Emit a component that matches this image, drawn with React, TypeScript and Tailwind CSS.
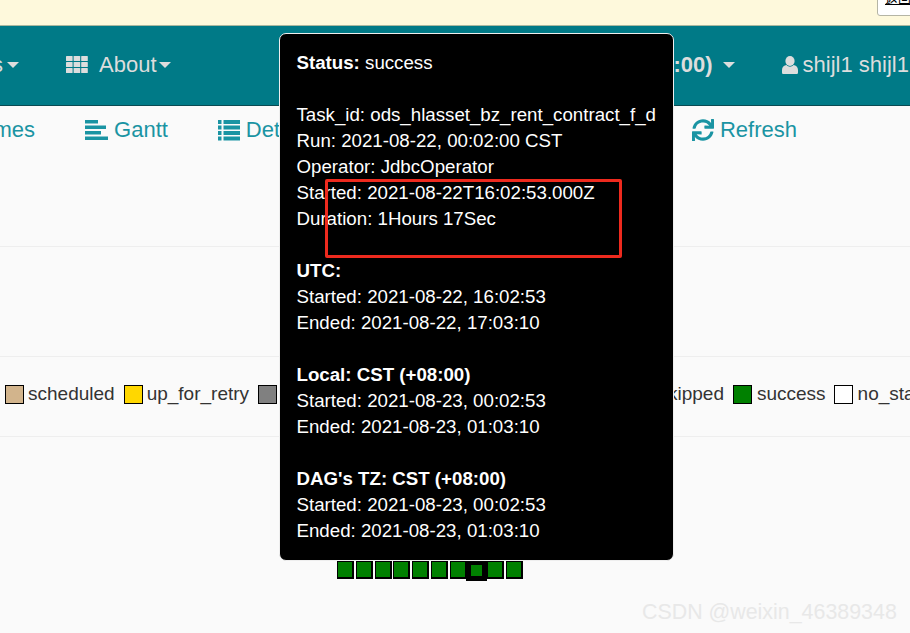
import { FaSync } from 'react-icons/fa';

const legendLeft = [
  { name: 'scheduled', color: 'bg-[#d2b48c]' },
  { name: 'up_for_retry', color: 'bg-[#ffd700]' },
];

const caret = 'inline-block w-0 h-0 border-x-[6px] border-x-transparent border-t-[6px] border-t-[#dddddd]';

function ThIcon() {
  const cells = [0, 1, 2];
  return (
    <svg width="22" height="17" viewBox="0 0 22 17" fill="currentColor" className="mr-[11px]">
      {cells.map((r) =>
        cells.map((c) => <rect key={`${r}-${c}`} x={c * 7.6} y={r * 6} width="6.6" height="5" rx="0.6" />)
      )}
    </svg>
  );
}

function UserIcon() {
  return (
    <svg width="16" height="18" viewBox="0 0 16 18" fill="currentColor" className="ml-[47px] mr-[5px]">
      <ellipse cx="8" cy="5" rx="4.6" ry="5" />
      <path d="M0 14c0-3 2-4.5 4.5-5 1 1.200 2.200 1.700 3.500 1.700s2.500-.5 3.500-1.700c2.500.5 4.500 2 4.500 5v2.500c0 1-.7 1.500-1.500 1.500h-13c-.8 0-1.500-.5-1.500-1.500z" />
    </svg>
  );
}

function GanttIcon() {
  return (
    <svg width="23" height="20" viewBox="0 0 23 20" fill="currentColor" className="mr-[6px]">
      <rect x="0" y="0" width="13" height="3.500" />
      <rect x="0" y="5.500" width="21" height="3.500" />
      <rect x="0" y="11" width="16" height="3.500" />
      <rect x="0" y="16.500" width="23" height="3.500" />
    </svg>
  );
}

function ListIcon() {
  const rows = [0, 1, 2, 3];
  return (
    <svg width="22" height="21" viewBox="0 0 22 21" fill="currentColor" className="mr-[6px]">
      {rows.map((r) => (
        <g key={r}>
          <rect x="0" y={r * 5.500} width="3.500" height="4" />
          <rect x="5.500" y={r * 5.500} width="16.500" height="4" />
        </g>
      ))}
    </svg>
  );
}

function Tooltip() {
  return (
    <div className="absolute left-[279px] top-[33px] w-[395px] h-[528px] bg-black border border-[#eeeeee] rounded-[7px] pl-[16.5px] pt-[15.5px] text-white text-[18.7px] leading-[26px] whitespace-nowrap">
      <div><b>Status:</b> success</div>
      <div className="h-[26px]" />
      <div>Task_id: ods_hlasset_bz_rent_contract_f_d</div>
      <div>Run: 2021-08-22, 00:02:00 CST</div>
      <div>Operator: JdbcOperator</div>
      <div>Started: 2021-08-22T16:02:53.000Z</div>
      <div>Duration: 1Hours 17Sec</div>
      <div className="h-[26px]" />
      <div><b>UTC:</b></div>
      <div>Started: 2021-08-22, 16:02:53</div>
      <div>Ended: 2021-08-22, 17:03:10</div>
      <div className="h-[26px]" />
      <div><b>Local: CST (+08:00)</b></div>
      <div>Started: 2021-08-23, 00:02:53</div>
      <div>Ended: 2021-08-23, 01:03:10</div>
      <div className="h-[26px]" />
      <div><b>DAG's TZ: CST (+08:00)</b></div>
      <div>Started: 2021-08-23, 00:02:53</div>
      <div>Ended: 2021-08-23, 01:03:10</div>
    </div>
  );
}

export default function App() {
  return (
    <div className="relative w-[910px] h-[633px] overflow-hidden bg-[#fafafa] font-['Liberation_Sans',Arial,sans-serif]">
      {/* Banner */}
      <div className="h-[26px] bg-[#fef9dc] border-b border-[#a9b8a0]" />

      {/* Top nav */}
      <div className="h-[80px] bg-[#007a87] border-b border-[#0a4a52] flex items-center pb-[2px] text-[22px] text-[#dddddd] whitespace-nowrap">
        <div className="flex items-center ml-[-8px] w-[66px] gap-[4px]">
          <span>s</span>
          <span className={caret} />
        </div>
        <div className="flex items-center ml-[8px]">
          <ThIcon />
          <span>About</span>
          <span className={`${caret} ml-[2px]`} />
        </div>
        <div className="flex items-center ml-auto mr-[1px]">
          <span className="font-bold">:00)</span>
          <span className={`${caret} ml-[10px]`} />
          <UserIcon />
          <span>shijl1 shijl1</span>
        </div>
      </div>

      {/* Sub nav */}
      <div className="h-[141px] border-b border-[#eeeeee] pt-[11px] flex items-start text-[22px] leading-[26px] text-[#1a94a3] whitespace-nowrap">
        <span className="ml-[-31px]">names</span>
        <span className="flex items-center ml-[50px]">
          <GanttIcon />Gantt
        </span>
        <span className="flex items-center ml-[50px]">
          <ListIcon />Details
        </span>
        <span className="flex items-center ml-auto mr-[113px]">
          <FaSync className="mr-[6px]" />Refresh
        </span>
      </div>

      {/* Spacer */}
      <div className="h-[110px] border-b border-[#eeeeee]" />

      {/* Legend */}
      <div className="h-[80px] border-b border-[#eeeeee] flex items-center pl-[5px] pb-[4px] text-[19px] text-[#333333] whitespace-nowrap">
        {legendLeft.map((item) => (
          <span key={item.name} className="flex items-center mr-[9px]">
            <span className={`w-[19px] h-[19px] border border-black mr-[4px] ${item.color}`} />
            {item.name}
          </span>
        ))}
        <span className="w-[19px] h-[19px] border border-black bg-[#808080]" />
        <span className="flex items-center ml-auto mr-[-30px]">
          <span className="mr-[9px]">skipped</span>
          <span className="w-[19px] h-[19px] border border-black bg-[#008000] mr-[5px]" />
          <span className="mr-[8px]">success</span>
          <span className="w-[19px] h-[19px] border border-black bg-white mr-[5px]" />
          no_status
        </span>
      </div>

      {/* Task squares */}
      <div className="flex items-start pl-[337px] pt-[124px] gap-[1.75px]">
        {Array.from({ length: 10 }).map((_, i) => (
          <div
            key={i}
            className={
              i === 7
                ? 'w-[21px] h-[20px] mx-[-2px] bg-[#008000] border-x-[5px] border-t-[4px] border-b-[5px] border-black'
                : 'w-[17px] h-[18px] bg-[#008000] border border-r-2 border-b-2 border-black'
            }
          />
        ))}
      </div>

      <Tooltip />

      {/* Red annotation box */}
      <div className="absolute left-[325px] top-[179px] w-[297px] h-[79px] border-[3px] border-[#ee2a1e] rounded-[2px]" />

      {/* Corner popup */}
      <div className="absolute left-[877px] top-[-4px] w-[40px] h-[20px] bg-white border border-[#b5b5a5] rounded-[3px] overflow-hidden">
        <div className="mt-[-6px] pl-[7px] text-[13px] leading-[14px] text-black underline whitespace-nowrap font-['Noto_Sans_CJK_SC',sans-serif]">返回</div>
      </div>

      {/* Watermark */}
      <div className="absolute left-[642px] top-[600px] text-[21.4px] leading-[24px] text-[#e8e8e8] whitespace-nowrap">
        CSDN @weixin_46389348
      </div>
    </div>
  );
}
